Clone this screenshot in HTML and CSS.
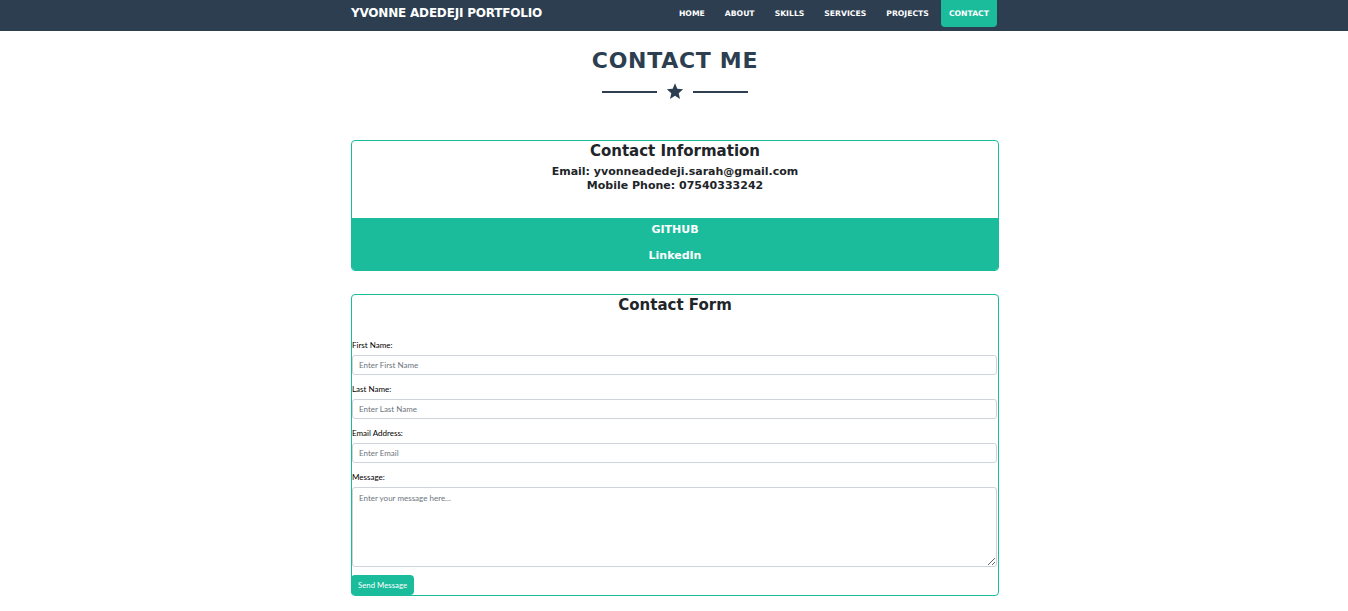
FILE: index.html
```html
<!DOCTYPE html>
<html>
<head>
<meta charset="utf-8">
<link rel="stylesheet" href="styles.css">
</head>
<body>
<nav class="navbar">
  <div class="nav-inner">
    <a class="brand">YVONNE ADEDEJI PORTFOLIO</a>
    <ul class="nav-links">
      <li><a>HOME</a></li>
      <li><a>ABOUT</a></li>
      <li><a>SKILLS</a></li>
      <li><a>SERVICES</a></li>
      <li><a>PROJECTS</a></li>
      <li><a class="active">CONTACT</a></li>
    </ul>
  </div>
</nav>
<main class="page">
  <h1 class="title">CONTACT ME</h1>
  <div class="divider">
    <span class="line"></span>
    <svg class="star" width="18" height="17" viewBox="0 0 24 23"><path d="M12 0.5l3.1 7.3 7.9 0.7-6 5.2 1.8 7.8L12 17.4l-6.8 4.1 1.8-7.8-6-5.2 7.9-0.7z" fill="#2c3e50"/></svg>
    <span class="line"></span>
  </div>
  <section class="card info">
    <h2>Contact Information</h2>
    <p class="detail first">Email: yvonneadedeji.sarah@gmail.com</p>
    <p class="detail">Mobile Phone: 07540333242</p>
    <div class="links">
      <a>GITHUB</a>
      <a>LinkedIn</a>
    </div>
  </section>
  <section class="card form-card">
    <h2>Contact Form</h2>
    <form class="form">
      <label>First Name:</label>
      <input type="text" placeholder="Enter First Name">
      <label>Last Name:</label>
      <input type="text" placeholder="Enter Last Name">
      <label>Email Address:</label>
      <input type="text" placeholder="Enter Email">
      <label>Message:</label>
      <textarea placeholder="Enter your message here..."></textarea>
      <button type="button">Send Message</button>
    </form>
  </section>
</main>
</body>
</html>
```
FILE: styles.css
```css
* { box-sizing: border-box; }
body {
  margin: 0;
  font-family: "DejaVu Sans", sans-serif;
  background: #fff;
  color: #2c3e50;
}
.navbar {
  background: #2c3e50;
  height: 31px;
}
.nav-inner {
  width: 650px;
  padding-left: 2px;
  margin: 0 auto;
  display: flex;
  justify-content: space-between;
  align-items: flex-start;
}
.brand {
  color: #fff;
  font-weight: bold;
  font-size: 12px;
  letter-spacing: -0.2px;
  line-height: 26px;
}
.nav-links {
  list-style: none;
  margin: 0 2px 0 0;
  padding: 0;
  display: flex;
}
.nav-links a {
  display: block;
  color: #fff;
  font-weight: bold;
  font-size: 7.7px;
  padding: 0 10px;
  line-height: 27px;
  border-radius: 0 0 4px 4px;
}
.nav-links li:first-child a { padding-left: 0; }
.nav-links a.active {
  background: #1abc9c;
  padding: 0 8px;
  margin-left: 2px;
}
.page {
  width: 650px;
  padding-left: 2px;
  margin: 0 auto;
  display: flex;
  flex-direction: column;
}
.title {
  margin: 15px 0 0;
  text-align: center;
  font-size: 22px;
  line-height: 30px;
  font-weight: bold;
  letter-spacing: 0.7px;
}
.divider {
  display: flex;
  justify-content: center;
  align-items: center;
  gap: 9px;
  margin-top: 7px;
  height: 18px;
}
.line {
  width: 55px;
  height: 2px;
  background: #2c3e50;
}
.star { display: block; margin-top: -1px; }
.card {
  border: 1px solid #1abc9c;
  border-radius: 4px;
  color: #212529;
}
.info {
  margin-top: 39px;
  overflow: hidden;
  text-align: center;
}
.card h2 {
  margin: 0;
  font-size: 15px;
  line-height: 20px;
  font-weight: bold;
  text-align: center;
}
.detail {
  margin: 0;
  font-size: 11px;
  line-height: 14px;
  font-weight: bold;
}
.detail.first { margin-top: 4px; }
.links {
  margin-top: 25px;
  background: #1abc9c;
  display: flex;
  flex-direction: column;
  padding: 3px 0 5px;
  gap: 8px;
}
.links a {
  color: #fff;
  font-weight: bold;
  font-size: 11px;
  line-height: 18px;
}
.form-card {
  margin-top: 23px;
  margin-bottom: 15px;
}
.form {
  display: flex;
  flex-direction: column;
  align-items: flex-start;
  margin-top: 25px;
}
.form label {
  font-family: "Lato", sans-serif;
  font-size: 8px;
  line-height: 10px;
  color: #000;
  margin-bottom: 5px;
}
.form input, .form textarea {
  width: calc(100% - 1px);
  height: 20px;
  border: 1px solid #ced4da;
  border-radius: 3px;
  padding: 0 6px;
  font-family: "Lato", sans-serif;
  font-size: 8px;
  margin-bottom: 9px;
  color: #495057;
}
.form input::placeholder, .form textarea::placeholder { color: #6c757d; }
.form textarea {
  height: 80px;
  padding: 5px 6px;
  resize: vertical;
  margin-bottom: 8px;
}
.form button {
  background: #1abc9c;
  color: #fff;
  border: none;
  border-radius: 4px;
  font-family: "Lato", sans-serif;
  font-size: 7.8px;
  height: 20px;
  padding: 0 7px;
  margin-left: -1px;
  margin-bottom: 0;
}
```
